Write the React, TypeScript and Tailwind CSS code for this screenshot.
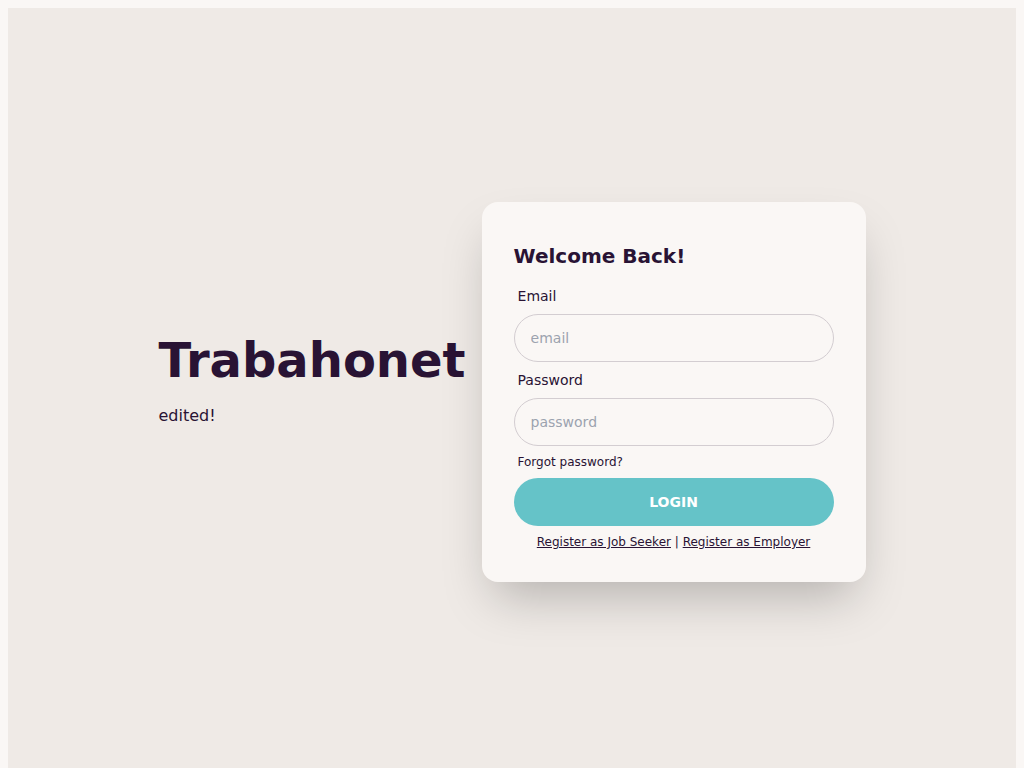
export default function App() {
  return (
    <div className="min-h-screen bg-[#faf7f5] p-2 font-['DejaVu_Sans',sans-serif] text-[#291334]">
      <div className="flex min-h-screen items-center justify-center bg-[#efeae6]">
        <div className="flex items-center gap-4 p-4">
          <div className="text-left">
            <h1 className="text-5xl leading-none font-bold">Trabahonet</h1>
            <p className="py-5 text-base leading-6">edited!</p>
          </div>

          <div className="w-96 shrink-0 rounded-2xl bg-[#faf7f5] shadow-2xl">
            <form className="flex flex-col px-8 pt-10 pb-8">
              <h2 className="text-xl leading-7 font-semibold">Welcome Back!</h2>

              <div className="mt-2 flex flex-col">
                <label className="px-1 py-2 text-sm leading-5">Email</label>
                <input
                  type="email"
                  placeholder="email"
                  className="h-12 rounded-full border border-[#d3cdd1] bg-transparent px-4 text-sm outline-none placeholder:text-[#9ca3af]"
                />
              </div>

              <div className="flex flex-col">
                <label className="px-1 py-2 text-sm leading-5">Password</label>
                <input
                  type="password"
                  placeholder="password"
                  className="h-12 rounded-full border border-[#d3cdd1] bg-transparent px-4 text-sm outline-none placeholder:text-[#9ca3af]"
                />
                <label className="px-1 py-2 text-xs leading-4">
                  <a href="#">Forgot password?</a>
                </label>
              </div>

              <button
                type="button"
                className="h-12 rounded-full bg-[#65c3c8] text-sm font-semibold text-white uppercase"
              >
                Login
              </button>

              <p className="mt-2 text-center text-xs leading-4">
                <a href="#" className="underline">
                  Register as Job Seeker
                </a>{" "}
                |{" "}
                <a href="#" className="underline">
                  Register as Employer
                </a>
              </p>
            </form>
          </div>
        </div>
      </div>
    </div>
  );
}
